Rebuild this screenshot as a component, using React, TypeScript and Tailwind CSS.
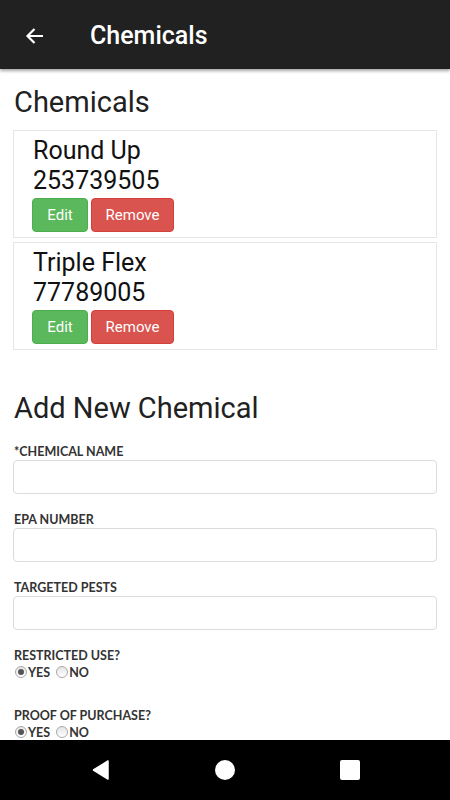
import React from "react";

const chemicals = [
  { name: "Round Up", epa: "253739505" },
  { name: "Triple Flex", epa: "77789005" },
];

export default function App() {
  return (
    <div className="flex h-[800px] w-[450px] flex-col overflow-hidden bg-white font-['Roboto',sans-serif]">
      <header className="relative z-10 flex h-[69px] shrink-0 items-center bg-[#212121] pt-[2px] shadow-[0_2px_3px_rgba(0,0,0,0.35)]">
        <svg className="ml-[23px]" width="24" height="24" viewBox="0 0 24 24" fill="none">
          <path d="M20 12H4.5M11.5 5 4.5 12l7 7" stroke="white" strokeWidth="2.2" />
        </svg>
        <h1 className="ml-[43px] text-[25px] font-medium text-white">Chemicals</h1>
      </header>

      <main className="flex-1 overflow-hidden px-[13px]">
        <h2 className="mt-[15px] pl-px text-[29px] leading-[36px] text-[#212121]">Chemicals</h2>

        <div className="mt-[10px] flex flex-col gap-[4px]">
          {chemicals.map((c) => (
            <ChemicalCard key={c.name} name={c.name} epa={c.epa} />
          ))}
        </div>

        <h2 className="mt-[40px] pl-px text-[29px] leading-[36px] text-[#212121]">Add New Chemical</h2>

        <form className="mt-[18px] font-['Lato',sans-serif]">
          <Field label="*CHEMICAL NAME" />
          <Field label="EPA NUMBER" />
          <Field label="TARGETED PESTS" />
          <RadioGroup label="RESTRICTED USE?" />
          <RadioGroup label="PROOF OF PURCHASE?" />
        </form>
      </main>

      <nav className="flex h-[60px] shrink-0 items-center justify-center bg-black">
        <div className="flex w-[125px] justify-center">
          <svg width="17" height="20" viewBox="0 0 17 20">
            <path d="M16 1 L16 19 L1.5 10 Z" fill="white" stroke="white" strokeWidth="1.5" strokeLinejoin="round" />
          </svg>
        </div>
        <div className="flex w-[125px] justify-center">
          <span className="h-[20px] w-[20px] rounded-full bg-white" />
        </div>
        <div className="flex w-[125px] justify-center">
          <span className="h-[20px] w-[20px] rounded-[2px] bg-white" />
        </div>
      </nav>
    </div>
  );
}

function ChemicalCard({ name, epa }: { name: string; epa: string }) {
  return (
    <div className="border border-[#e6e6e6] px-[18px] pt-[5px] pb-[5px]">
      <p className="pl-px text-[25px] leading-[30px] text-[#111]">{name}</p>
      <p className="pl-px text-[25px] leading-[30px] text-[#111]">{epa}</p>
      <div className="mt-[2px] flex gap-[3px]">
        <button
          type="button"
          className="h-[34px] w-[56px] rounded-[4px] border border-[#4cae4c] bg-[#5cb85c] text-[15px] text-white"
        >
          Edit
        </button>
        <button
          type="button"
          className="h-[34px] w-[83px] rounded-[4px] border border-[#d43f3a] bg-[#d9534f] text-[15px] text-white"
        >
          Remove
        </button>
      </div>
    </div>
  );
}

function Field({ label }: { label: string }) {
  return (
    <div className="mb-[18px]">
      <label className="block pl-px text-[12.5px] font-bold leading-[15px] text-[#333]">{label}</label>
      <input className="mt-[1px] block h-[34px] w-full rounded-[4px] border border-[#dcdcdc] px-3 outline-none" />
    </div>
  );
}

function RadioGroup({ label }: { label: string }) {
  return (
    <div className="mb-[28px]">
      <p className="pl-px text-[12.5px] font-bold leading-[15px] text-[#333]">{label}</p>
      <div className="flex h-[17px] items-center text-[12.5px] font-bold leading-[12px] text-[#333]">
        <Radio checked />
        <span className="ml-[1px] mt-[3px]">YES</span>
        <span className="ml-[4px]">
          <Radio />
        </span>
        <span className="ml-[1px] mt-[3px]">NO</span>
      </div>
    </div>
  );
}

function Radio({ checked = false }: { checked?: boolean }) {
  return (
    <span className="ml-[2px] flex h-[12px] w-[12px] items-center justify-center rounded-full border border-[#a9a9a9] bg-gradient-to-b from-[#e4e4e4] to-white">
      {checked ? <span className="h-[6px] w-[6px] rounded-full bg-[#555]" /> : null}
    </span>
  );
}
